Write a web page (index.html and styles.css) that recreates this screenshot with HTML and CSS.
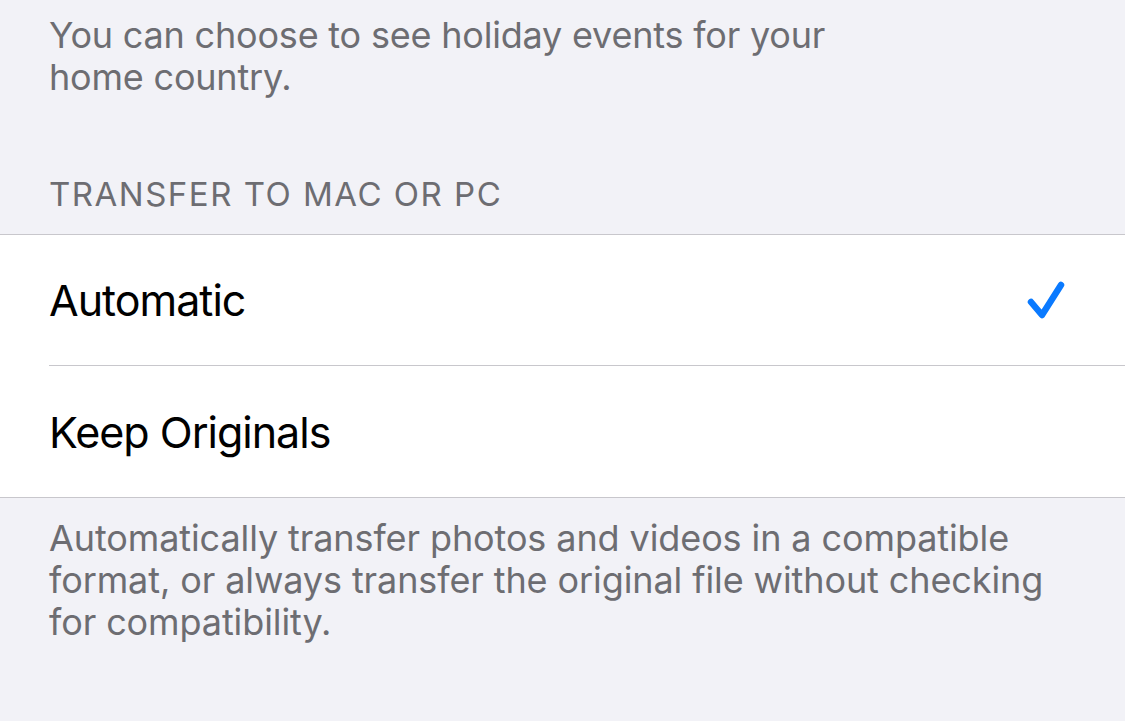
FILE: index.html
```html
<!DOCTYPE html>
<html>
<head>
<meta charset="utf-8">
<link rel="stylesheet" href="styles.css">
</head>
<body>
<div class="page">
  <p class="footer footer-top">You can choose to see holiday events for your<br>home country.</p>
  <h2 class="section-header">TRANSFER TO MAC OR PC</h2>
  <div class="group">
    <div class="row">
      <span class="label">Automatic</span>
      <svg class="check" width="40" height="40" viewBox="0 0 40 40">
        <polyline points="4,22 15,35 34,5" fill="none" stroke="#0a7aff" stroke-width="6.5" stroke-linecap="round" stroke-linejoin="round"/>
      </svg>
    </div>
    <div class="row">
      <span class="label">Keep Originals</span>
    </div>
  </div>
  <p class="footer footer-bottom">Automatically transfer photos and videos in a compatible format, or always transfer the original file without checking for compatibility.</p>
</div>
</body>
</html>
```

FILE: styles.css
```css
html, body {
  margin: 0;
  padding: 0;
  background: #f2f2f7;
}
.page {
  width: 1125px;
  height: 721px;
  overflow: hidden;
  font-family: Inter, "Liberation Sans", sans-serif;
}
.footer {
  margin: 0;
  padding: 0 49px;
  font-size: 36px;
  line-height: 42px;
  color: #6d6d72;
  letter-spacing: -0.2px;
}
.footer-top {
  padding-top: 14px;
}
.section-header {
  margin: 75px 0 0 0;
  padding: 0 49px 19px 49px;
  font-size: 33px;
  line-height: 42px;
  font-weight: 400;
  color: #6d6d72;
  letter-spacing: 1.5px;
}
.group {
  background: #ffffff;
  border-top: 1px solid #c8c7cc;
  border-bottom: 1px solid #c8c7cc;
}
.row {
  height: 130px;
  margin-left: 49px;
  padding-right: 58px;
  display: flex;
  align-items: center;
  justify-content: space-between;
}
.row + .row {
  border-top: 1px solid #c8c7cc;
  height: 131px;
}
.label {
  font-size: 43px;
  color: #000000;
  letter-spacing: -1px;
}
.check {
  display: block;
}
.footer-bottom {
  padding-top: 19px;
  padding-right: 60px;
  letter-spacing: -0.1px;
}
```
